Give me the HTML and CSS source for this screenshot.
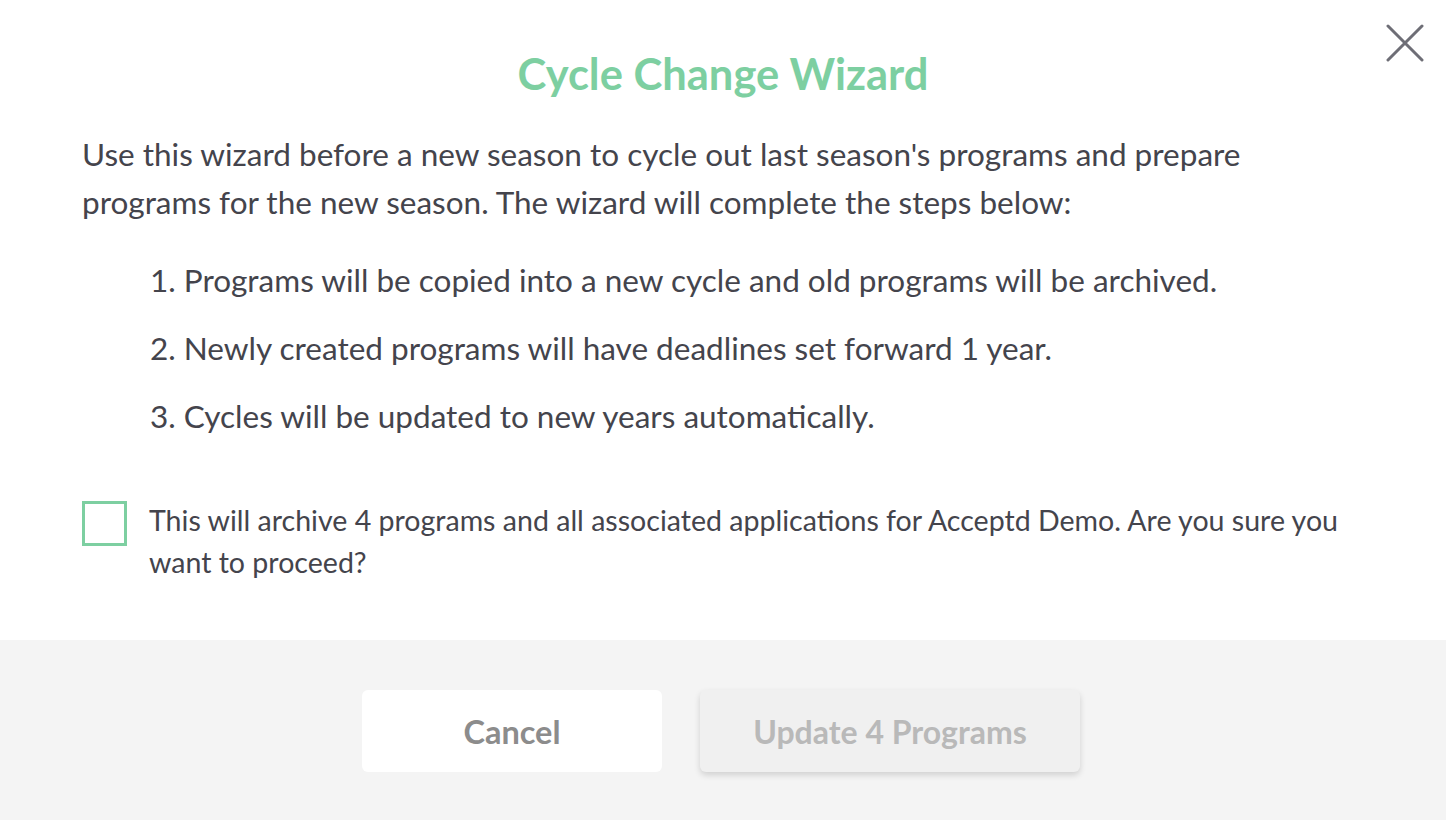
FILE: index.html
```html
<!DOCTYPE html>
<html lang="en">
<head>
    <meta charset="UTF-8">
    <title>Cycle Change Wizard</title>
    <link rel="stylesheet" href="styles.css">
</head>
<body>
    <div class="modal">
        <button class="close" aria-label="Close">
            <svg width="38" height="38" viewBox="0 0 38 38">
                <path d="M2 2 L36 36 M36 2 L2 36" stroke="#6e6e76" stroke-width="3" stroke-linecap="round" fill="none"/>
            </svg>
        </button>

        <div class="content">
            <h1>Cycle Change Wizard</h1>
            <p class="intro">Use this wizard before a new season to cycle out last season's programs and prepare programs for the new season. The wizard will complete the steps below:</p>

            <ol class="steps">
                <li>1. Programs will be copied into a new cycle and old programs will be archived.</li>
                <li>2. Newly created programs will have deadlines set forward 1 year.</li>
                <li>3. Cycles will be updated to new years automatically.</li>
            </ol>

            <label class="confirm">
                <span class="box"></span>
                <span class="confirm-text">This will archive 4 programs and all associated applications for Acceptd Demo. Are you sure you want to proceed?</span>
            </label>
        </div>

        <div class="footer">
            <button class="btn btn-cancel">Cancel</button>
            <button class="btn btn-update" disabled>Update 4 Programs</button>
        </div>
    </div>
</body>
</html>
```

FILE: styles.css
```css
body {
    margin: 0;
    font-family: Lato, 'Open Sans', sans-serif;
    background-color: #fff;
    color: #44444c;
}

.modal {
    position: relative;
    height: 820px;
    display: flex;
    flex-direction: column;
}

.close {
    position: absolute;
    top: 24px;
    right: 22px;
    padding: 0;
    border: none;
    background: none;
    cursor: pointer;
}

.close svg {
    display: block;
}

.content {
    flex: 1;
    padding: 0 82px;
}

h1 {
    margin: 48px 0 0 0;
    text-align: center;
    font-size: 43.5px;
    font-weight: 700;
    line-height: 50px;
    color: #7dcfa1;
}

.intro {
    margin: 32px 0 0 0;
    font-size: 31.5px;
    line-height: 48px;
}

.steps {
    list-style: none;
    margin: 34px 0 0 0;
    padding: 0 0 0 68px;
}

.steps li {
    font-size: 31.5px;
    line-height: 40px;
    margin-bottom: 28px;
}

.confirm {
    display: flex;
    align-items: flex-start;
    gap: 22px;
    margin-top: 64px;
}

.box {
    flex: none;
    width: 39px;
    height: 39px;
    border: 3px solid #7dcfa1;
    margin-top: 1px;
}

.confirm-text {
    font-size: 28.55px;
    line-height: 42px;
    margin-top: -1px;
}

.footer {
    height: 180px;
    background-color: #f4f4f4;
    display: flex;
    justify-content: center;
    align-items: flex-start;
    gap: 38px;
    padding: 50px 4px 0 0;
    box-sizing: border-box;
}

.btn {
    height: 82px;
    border: none;
    border-radius: 6px;
    font-family: Lato, 'Open Sans', sans-serif;
    font-weight: 700;
    cursor: pointer;
}

.btn-cancel {
    width: 300px;
    background-color: #fff;
    color: #8c8c8c;
    font-size: 32.5px;
}

.btn-update {
    width: 380px;
    background-color: #f0f0f0;
    color: #b9b9b9;
    font-size: 32px;
    box-shadow: 0 3px 6px rgba(0,0,0,0.15);
}
```
